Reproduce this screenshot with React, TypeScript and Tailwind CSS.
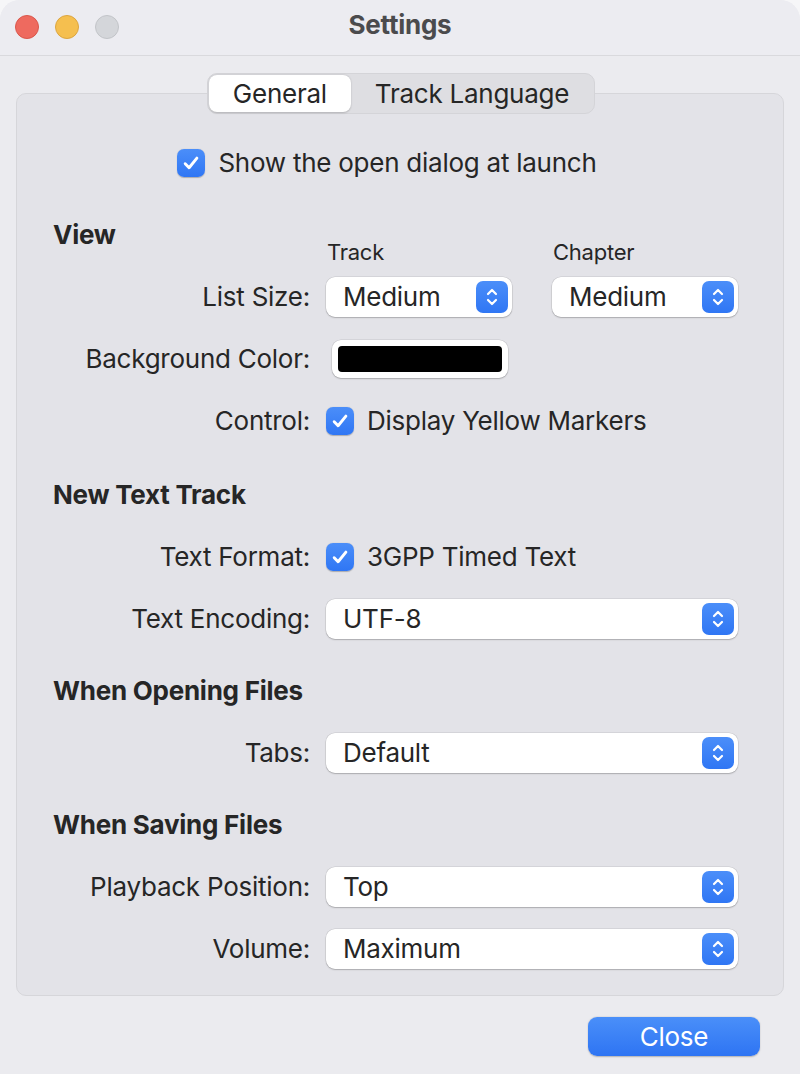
import { ReactNode } from "react";

const font = { fontFamily: "Inter, 'Liberation Sans', sans-serif" };

function Check() {
  return (
    <span className="flex h-[28px] w-[28px] shrink-0 items-center justify-center rounded-[7px] bg-gradient-to-b from-[#4b8ef9] to-[#2f76f4] shadow-[0_0.5px_1px_rgba(0,0,0,0.25)]">
      <svg width="20" height="20" viewBox="0 0 18 18" fill="none">
        <path d="M3.8 9.6 L7.3 13.3 L14.3 4.6" stroke="white" strokeWidth="2.6" strokeLinecap="round" strokeLinejoin="round" />
      </svg>
    </span>
  );
}

function Stepper() {
  return (
    <span className="flex h-[32px] w-[32px] items-center justify-center rounded-[7px] bg-gradient-to-b from-[#4b8ef9] to-[#2f76f4]">
      <svg width="16" height="22" viewBox="0 0 16 22" fill="none">
        <path d="M4 8 L8 4 L12 8" stroke="white" strokeWidth="2.2" strokeLinecap="round" strokeLinejoin="round" />
        <path d="M4 14 L8 18 L12 14" stroke="white" strokeWidth="2.2" strokeLinecap="round" strokeLinejoin="round" />
      </svg>
    </span>
  );
}

function Popup({ value, wide }: { value: string; wide?: boolean }) {
  return (
    <div
      className={`flex h-[40px] items-center justify-between rounded-[9px] bg-white pl-[17px] pr-[4px] shadow-[0_0_0_0.5px_rgba(0,0,0,0.12),0_1px_1.5px_rgba(0,0,0,0.2)] ${
        wide ? "w-[412px]" : "w-[186px]"
      }`}
    >
      <span>{value}</span>
      <Stepper />
    </div>
  );
}

function Row({ label, children }: { label: string; children: ReactNode }) {
  return (
    <div className="flex h-[62px] items-center">
      <div className="w-[293px] text-right">{label}</div>
      <div className="ml-[16px] flex items-center">{children}</div>
    </div>
  );
}

function Header({ title, className = "" }: { title: string; className?: string }) {
  return (
    <div className={`flex h-[62px] items-center pl-[36px] font-bold ${className}`}>{title}</div>
  );
}

export default function App() {
  return (
    <div className="min-h-screen bg-[#f6f6f8]" style={font}>
      <div className="flex h-[1074px] w-[800px] flex-col overflow-hidden rounded-t-[20px] bg-[#ebebef] text-[26px] leading-none tracking-[-0.25px] text-[#262626]">
        {/* title bar */}
        <div className="relative flex h-[56px] shrink-0 items-center justify-center border-b border-[#d9d9dd] bg-[#ececf1] pb-[5px]">
          <div className="absolute left-[15px] top-[15px] flex gap-[16px]">
            <span className="h-[24px] w-[24px] rounded-full border border-[#d9574c] bg-[#ee6a5f]" />
            <span className="h-[24px] w-[24px] rounded-full border border-[#dba540] bg-[#f5bf4f]" />
            <span className="h-[24px] w-[24px] rounded-full border border-[#c2c4c8] bg-[#d4d6da]" />
          </div>
          <span className="font-bold text-[#4b4b4d]">Settings</span>
        </div>

        {/* tabs */}
        <div className="relative z-10 mt-[17px] flex justify-center">
          <div className="ml-[2px] flex h-[41px] items-center rounded-[10px] border border-[#d4d4d8] bg-[#dedee2] p-[1px]">
            <div className="flex h-full items-center rounded-[8px] bg-white px-[24px] shadow-[0_0.5px_2px_rgba(0,0,0,0.2)]">
              General
            </div>
            <div className="flex h-full items-center px-[24px]">Track Language</div>
          </div>
        </div>

        {/* group box */}
        <div className="mx-[16px] -mt-[21px] rounded-[10px] border border-[#d6d6da] bg-[#e3e3e8] pb-[15px] pt-[38px]">
          <div className="flex h-[62px] items-center justify-center gap-[13px] pr-[26px]">
            <Check />
            <span>Show the open dialog at launch</span>
          </div>

          <div className="mt-[10px] flex h-[62px]">
            <div className="flex w-[293px] items-center pl-[36px] font-bold">View</div>
            <div className="ml-[17px] flex items-end gap-[40px] pb-[3px] text-[22px]">
              <span className="w-[186px]">Track</span>
              <span>Chapter</span>
            </div>
          </div>
          <Row label="List Size:">
            <div className="flex gap-[40px]">
              <Popup value="Medium" />
              <Popup value="Medium" />
            </div>
          </Row>
          <Row label="Background Color:">
            <div className="ml-[6px] flex h-[38px] w-[176px] items-center justify-center rounded-[9px] bg-white shadow-[0_0_0_0.5px_rgba(0,0,0,0.12),0_1px_1.5px_rgba(0,0,0,0.2)]">
              <div className="h-[26px] w-[164px] rounded-[4px] bg-black" />
            </div>
          </Row>
          <Row label="Control:">
            <div className="flex items-center gap-[13px]">
              <Check />
              <span>Display Yellow Markers</span>
            </div>
          </Row>

          <Header title="New Text Track" className="mt-[12px]" />
          <Row label="Text Format:">
            <div className="flex items-center gap-[13px]">
              <Check />
              <span>3GPP Timed Text</span>
            </div>
          </Row>
          <Row label="Text Encoding:">
            <Popup value="UTF-8" wide />
          </Row>

          <Header title="When Opening Files" className="mt-[10px]" />
          <Row label="Tabs:">
            <Popup value="Default" wide />
          </Row>

          <Header title="When Saving Files" className="mt-[10px]" />
          <Row label="Playback Position:">
            <Popup value="Top" wide />
          </Row>
          <Row label="Volume:">
            <Popup value="Maximum" wide />
          </Row>
        </div>

        {/* footer */}
        <div className="mt-[21px] flex justify-end pr-[40px]">
          <button className="flex h-[39px] w-[172px] items-center justify-center rounded-[9px] bg-gradient-to-b from-[#4a8ff9] to-[#2e74f3] text-white shadow-[0_0.5px_1.5px_rgba(0,0,0,0.25)]">
            Close
          </button>
        </div>
      </div>
    </div>
  );
}
